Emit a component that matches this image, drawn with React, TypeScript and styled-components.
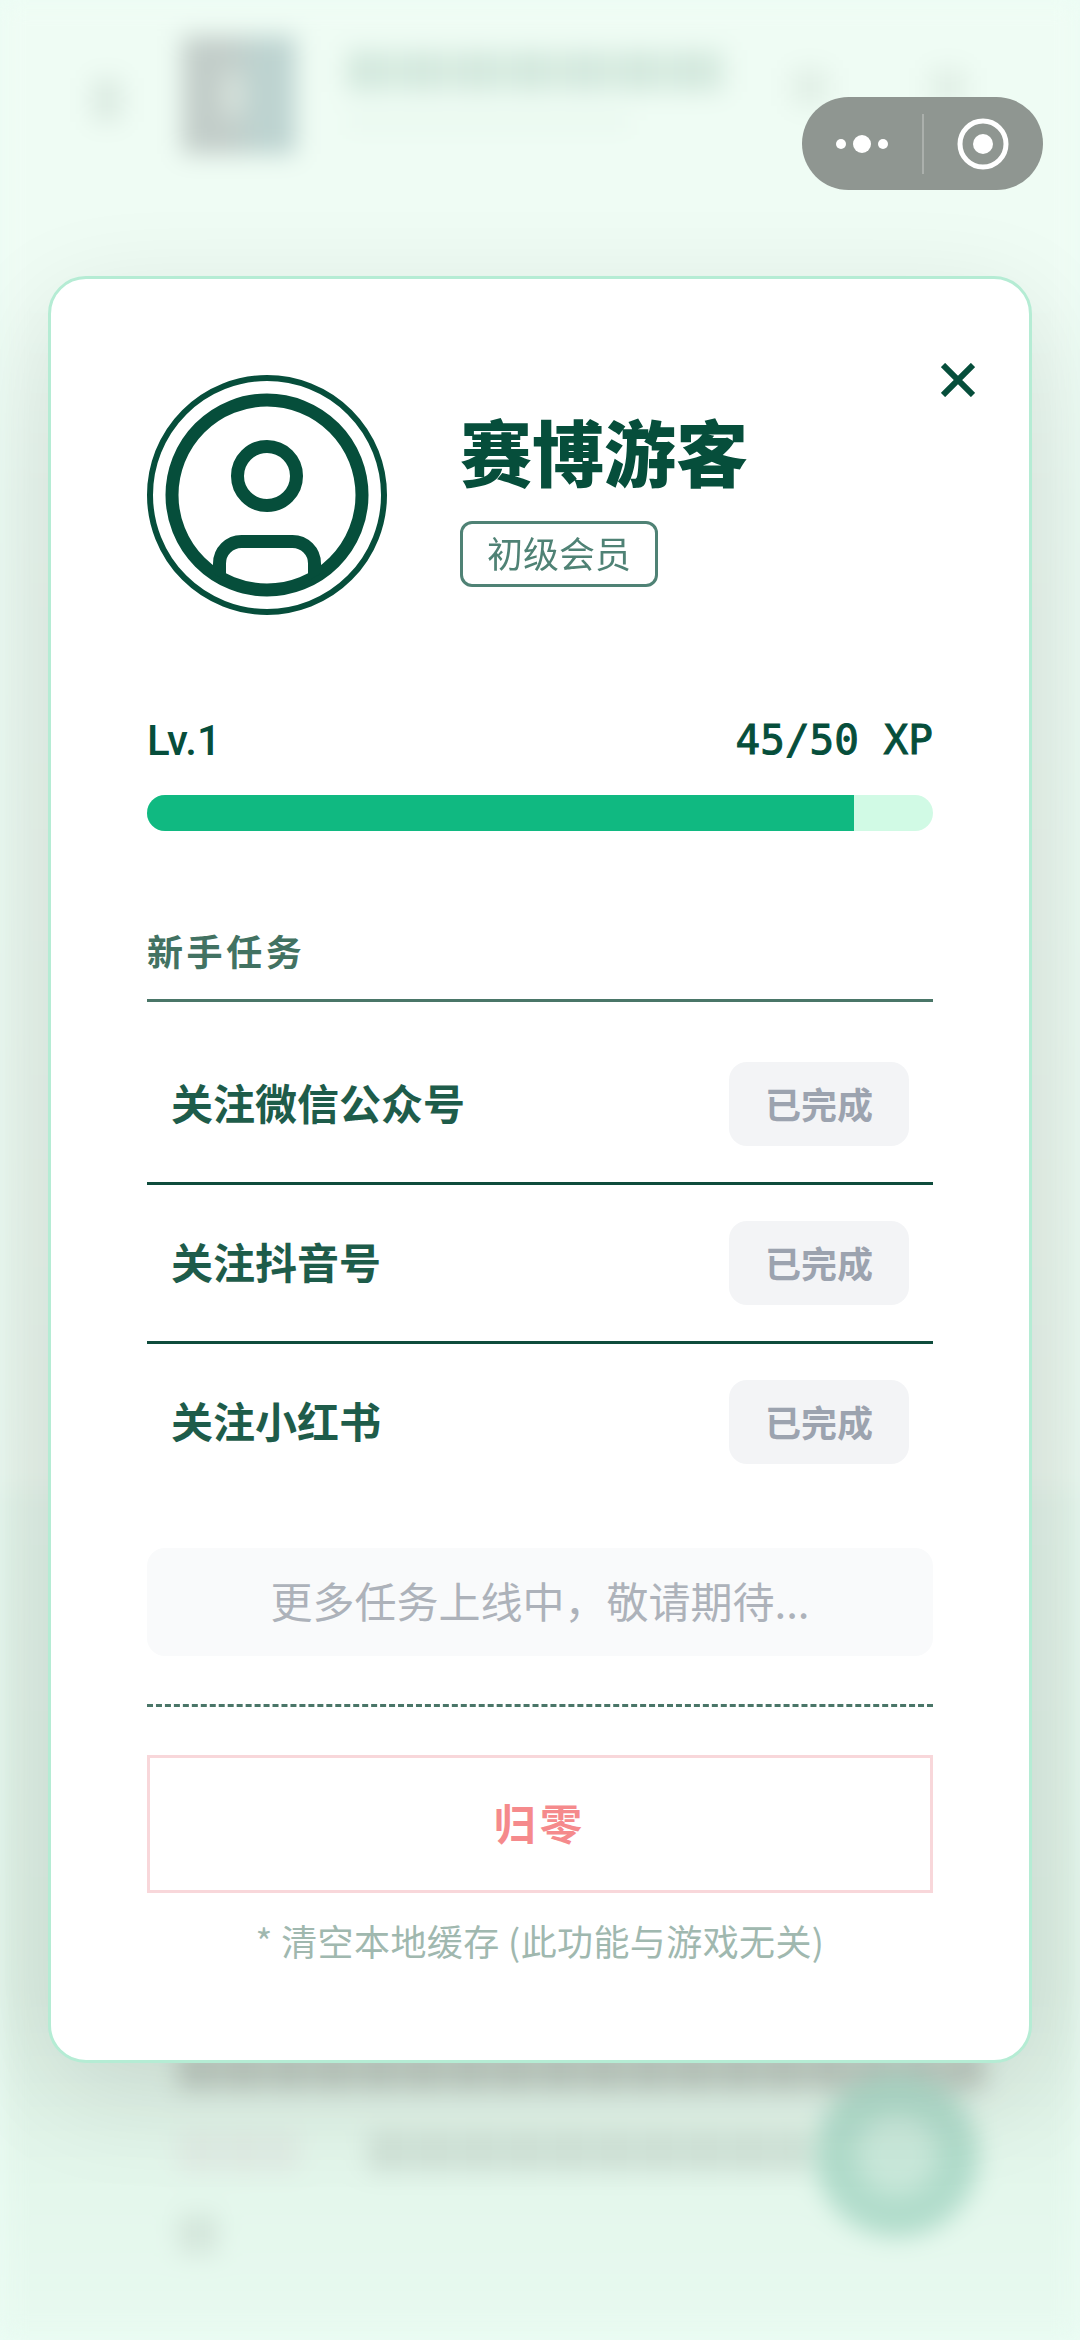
import styled, { createGlobalStyle } from "styled-components"

const GlobalStyle = createGlobalStyle`
  html, body {
    margin: 0;
    padding: 0;
    background: #ecfdf5;
  }
  * {
    box-sizing: border-box;
  }
`

const cjk = `"Noto Sans CJK SC", "Noto Sans", sans-serif`

const Page = styled.div`
  position: relative;
  width: 1080px;
  height: 2340px;
  overflow: hidden;
  padding-top: 276px;
  font-family: ${cjk};
  background: #ecfdf5;
`

/* the page behind the modal, only seen blurred */
const Backdrop = styled.div`
  position: absolute;
  inset: 0;
  display: flex;
  flex-direction: column;
  filter: blur(12px);
`

const BackHeader = styled.div`
  display: flex;
  align-items: flex-start;
  height: 1490px;
  padding: 36px 0 0 92px;
  background: linear-gradient(#effcf4 0, #effcf4 300px, #e9f7ef 500px, #e6f3ea 1490px);
`

const BackArrow = styled.div`
  width: 30px;
  height: 44px;
  margin-top: 42px;
  background: #dcebe2;
`

const Thumb = styled.div`
  width: 114px;
  height: 118px;
  margin-left: 60px;
  background: radial-gradient(ellipse 14px 34px at 45% 50%, #dbe6df 40%, transparent 100%),
    linear-gradient(90deg, #c2cdc9 0 45%, #bdd3d0 65%);
`

const BackTitle = styled.div`
  display: flex;
  flex-direction: column;
  gap: 22px;
  margin: 14px 0 0 50px;
`

const TitleBar = styled.div`
  width: 380px;
  height: 42px;
  background: repeating-linear-gradient(90deg, #d4e9de 0 46px, #dff0e7 46px 54px);
`

const SubBar = styled.div`
  width: 285px;
  height: 14px;
  background: #e8f7ee;
`

const BackIcon = styled.div<{ $gap: number }>`
  width: 38px;
  height: 38px;
  margin: 32px 0 0 ${(p) => p.$gap}px;
  background: #e2f0e7;
`

const BackBody = styled.div`
  flex: 1;
  display: flex;
  flex-direction: column;
  padding: 560px 80px 0 178px;
  gap: 42px;
  background: linear-gradient(#dff0e6 0, #dcefe3 500px, #e4f7ec 700px, #e8faf0 850px);
`

const BackRow = styled.div`
  display: flex;
  gap: 70px;
`

const BackLine = styled.div<{ $width: number; $color: string }>`
  width: ${(p) => p.$width}px;
  height: 40px;
  background: repeating-linear-gradient(90deg, ${(p) => p.$color} 0 42px, transparent 42px 45px);
`

const Fab = styled.div`
  position: absolute;
  left: 815px;
  top: 2073px;
  width: 164px;
  height: 164px;
  border-radius: 50%;
  border: 42px solid #b1dccb;
  background: #c9e8da;
`

const Capsule = styled.div`
  position: absolute;
  left: 802px;
  top: 97px;
  width: 241px;
  height: 93px;
  display: flex;
  align-items: center;
  border-radius: 47px;
  background: #8f9691;
`

const CapsuleHalf = styled.div`
  flex: 1;
  display: flex;
  align-items: center;
  justify-content: center;
`

const CapsuleLine = styled.div`
  width: 2px;
  height: 60px;
  background: rgba(255, 255, 255, 0.25);
`

const Modal = styled.div`
  position: relative;
  width: 984px;
  height: 1787px;
  margin: 0 auto;
  padding: 96px;
  background: #fff;
  border: 3px solid #b5ecd4;
  border-radius: 38px;
  box-shadow: 0 30px 110px rgba(0, 0, 0, 0.11);
`

const CloseButton = styled.div`
  position: absolute;
  top: 84px;
  right: 54px;
  display: flex;
`

const Profile = styled.div`
  display: flex;
  align-items: center;
  gap: 73px;
`

const Avatar = styled.svg`
  display: block;
  width: 240px;
  height: 240px;
  flex: none;
`

const ProfileText = styled.div`
  display: flex;
  flex-direction: column;
  align-items: flex-start;
`

const Name = styled.div`
  padding-bottom: 10px;
  font-size: 72px;
  line-height: 91px;
  font-weight: 900;
  color: #064e3b;
`

const Badge = styled.div`
  height: 66px;
  margin-top: 16px;
  padding: 0 24px 4px;
  display: flex;
  align-items: center;
  font-size: 36px;
  color: #064e3b;
  opacity: 0.7;
  border: 3px solid #064e3b;
  border-radius: 12px;
`

const LevelRow = styled.div`
  display: flex;
  align-items: center;
  justify-content: space-between;
  height: 58px;
  margin-top: 96px;
  color: #064e3b;
`

const Level = styled.span`
  font-family: Roboto, sans-serif;
  font-size: 42px;
  font-weight: 500;
`

const Xp = styled.span`
  font-family: "DejaVu Sans Mono", monospace;
  font-size: 41px;
  -webkit-text-stroke: 1px #064e3b;
`

const Track = styled.div`
  height: 36px;
  margin-top: 26px;
  border-radius: 18px;
  overflow: hidden;
  background: #d1fae5;
`

const Fill = styled.div`
  height: 100%;
  background: #10b981;
`

const SectionTitle = styled.div`
  margin-top: 96px;
  padding-bottom: 24px;
  font-size: 36px;
  line-height: 46px;
  height: 75px;
  font-weight: 700;
  letter-spacing: 3.6px;
  color: #427262;
  border-bottom: 3px solid #4a7668;
`

const TaskList = styled.div`
  margin-top: 24px;
`

const TaskRow = styled.div`
  display: flex;
  align-items: center;
  justify-content: space-between;
  padding: 36px 24px;
  border-bottom: 3px solid #0f4c3c;

  &:last-child {
    border-bottom: none;
  }
`

const TaskName = styled.span`
  padding-bottom: 6px;
  font-size: 42px;
  font-weight: 700;
  color: #1e5c4a;
`

const DoneButton = styled.div`
  height: 84px;
  padding: 0 36px 3px;
  display: flex;
  align-items: center;
  font-size: 36px;
  font-weight: 700;
  color: #9ca3af;
  background: #f3f4f6;
  border-radius: 18px;
`

const ComingSoon = styled.div`
  height: 108px;
  margin-top: 48px;
  padding-bottom: 5px;
  display: flex;
  align-items: center;
  justify-content: center;
  font-size: 42px;
  color: #adb2ba;
  background: #f9fafb;
  border-radius: 18px;
`

const ResetArea = styled.div`
  margin-top: 48px;
  padding-top: 48px;
  border-top: 3px dashed #4a7668;
`

const ResetButton = styled.div`
  height: 138px;
  padding-bottom: 6px;
  display: flex;
  align-items: center;
  justify-content: center;
  font-size: 42px;
  font-weight: 700;
  letter-spacing: 4.2px;
  color: #f58a8c;
  border: 3px solid #f8d7da;
`

const Hint = styled.div`
  margin-top: 24px;
  font-size: 36px;
  line-height: 47px;
  letter-spacing: 0.4px;
  text-align: center;
  color: #a0b8af;
`

const tasks = ["关注微信公众号", "关注抖音号", "关注小红书"]

export default function App() {
  return (
    <Page>
      <GlobalStyle />
      <Backdrop>
        <BackHeader>
          <BackArrow />
          <Thumb />
          <BackTitle>
            <TitleBar />
            <SubBar />
          </BackTitle>
          <BackIcon $gap={65} />
          <BackIcon $gap={100} />
        </BackHeader>
        <BackBody>
          <BackLine $width={810} $color="#bfccc2" />
          <BackRow>
            <BackLine $width={120} $color="#dfebe3" />
            <BackLine $width={440} $color="#cfe1d6" />
          </BackRow>
          <BackLine $width={40} $color="#d4e6db" />
        </BackBody>
        <Fab />
      </Backdrop>

      <Capsule>
        <CapsuleHalf>
          <svg width="52" height="18" viewBox="0 0 52 18">
            <circle cx="5" cy="9" r="5" fill="#fff" />
            <circle cx="26" cy="9" r="9" fill="#fff" />
            <circle cx="47" cy="9" r="5" fill="#fff" />
          </svg>
        </CapsuleHalf>
        <CapsuleLine />
        <CapsuleHalf>
          <svg width="52" height="52" viewBox="0 0 52 52">
            <circle cx="26" cy="26" r="23" fill="none" stroke="#fff" strokeWidth="5" />
            <circle cx="26" cy="26" r="10" fill="#fff" />
          </svg>
        </CapsuleHalf>
      </Capsule>

      <Modal>
        <CloseButton>
          <svg width="34" height="34" viewBox="0 0 34 34">
            <path d="M2 2 L32 32 M32 2 L2 32" fill="none" stroke="#064e3b" strokeWidth="6" />
          </svg>
        </CloseButton>

        <Profile>
          <Avatar viewBox="0 0 240 240">
            <defs>
              <clipPath id="ring">
                <circle cx="120" cy="120" r="95" />
              </clipPath>
            </defs>
            <circle cx="120" cy="120" r="117" fill="none" stroke="#064e3b" strokeWidth="6" />
            <circle cx="120" cy="120" r="95" fill="none" stroke="#064e3b" strokeWidth="13" />
            <circle cx="120" cy="101" r="29.5" fill="none" stroke="#064e3b" strokeWidth="13" />
            <rect
              x="72.5"
              y="166.5"
              width="95"
              height="80"
              rx="22"
              fill="none"
              stroke="#064e3b"
              strokeWidth="13"
              clipPath="url(#ring)"
            />
          </Avatar>
          <ProfileText>
            <Name>赛博游客</Name>
            <Badge>初级会员</Badge>
          </ProfileText>
        </Profile>

        <LevelRow>
          <Level>Lv.1</Level>
          <Xp>45/50 XP</Xp>
        </LevelRow>
        <Track>
          <Fill style={{ width: `${(45 / 50) * 100}%` }} />
        </Track>

        <SectionTitle>新手任务</SectionTitle>
        <TaskList>
          {tasks.map((task) => (
            <TaskRow key={task}>
              <TaskName>{task}</TaskName>
              <DoneButton>已完成</DoneButton>
            </TaskRow>
          ))}
        </TaskList>

        <ComingSoon>{"更多任务上线中\uFF0C敬请期待..."}</ComingSoon>

        <ResetArea>
          <ResetButton>归零</ResetButton>
          <Hint>* 清空本地缓存 (此功能与游戏无关)</Hint>
        </ResetArea>
      </Modal>
    </Page>
  )
}
